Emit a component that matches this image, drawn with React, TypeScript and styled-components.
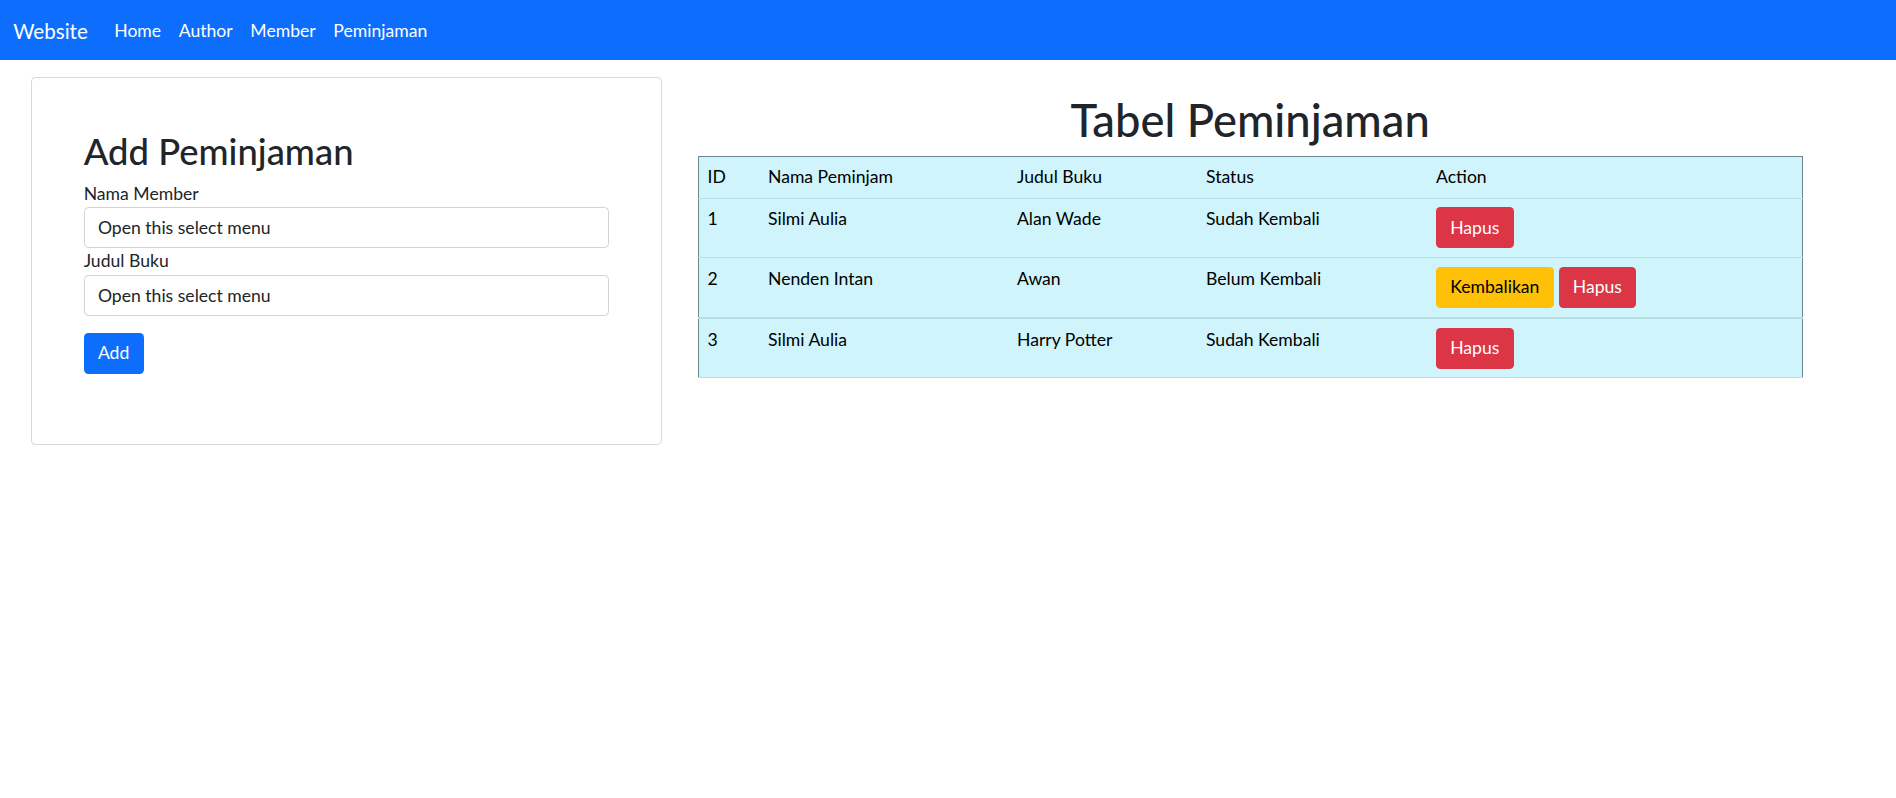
import styled, { createGlobalStyle } from "styled-components";

const GlobalStyle = createGlobalStyle`
  * {
    box-sizing: border-box;
  }
  body {
    margin: 0;
    background: #fff;
    color: #212529;
    font-family: Lato, "Liberation Sans", sans-serif;
    font-size: 17.6px;
    line-height: 1.5;
  }
`;

type Peminjaman = {
  id: number;
  nama: string;
  judul: string;
  status: string;
};

const data: Peminjaman[] = [
  { id: 1, nama: "Silmi Aulia", judul: "Alan Wade", status: "Sudah Kembali" },
  { id: 2, nama: "Nenden Intan", judul: "Awan", status: "Belum Kembali" },
  { id: 3, nama: "Silmi Aulia", judul: "Harry Potter", status: "Sudah Kembali" },
];

const menu = ["Home", "Author", "Member", "Peminjaman"];

export default function App() {
  return (
    <>
      <GlobalStyle />
      <Navbar>
        <Brand>Website</Brand>
        {menu.map((m) => (
          <NavLink key={m}>{m}</NavLink>
        ))}
      </Navbar>
      <Main>
        <Card>
          <CardTitle>Add Peminjaman</CardTitle>
          <Label>Nama Member</Label>
          <Select defaultValue="">
            <option value="">Open this select menu</option>
          </Select>
          <Label>Judul Buku</Label>
          <Select defaultValue="">
            <option value="">Open this select menu</option>
          </Select>
          <Button $variant="primary" $top>
            Add
          </Button>
        </Card>
        <TableSection>
          <PageTitle>Tabel Peminjaman</PageTitle>
          <Table>
            <colgroup>
              <col style={{ width: 61 }} />
              <col style={{ width: 249 }} />
              <col style={{ width: 189 }} />
              <col style={{ width: 230 }} />
              <col />
            </colgroup>
            <thead>
              <tr>
                <Th>ID</Th>
                <Th>Nama Peminjam</Th>
                <Th>Judul Buku</Th>
                <Th>Status</Th>
                <Th>Action</Th>
              </tr>
            </thead>
            <tbody>
              {data.map((row) => (
                <Row key={row.id}>
                  <Td>{row.id}</Td>
                  <Td>{row.nama}</Td>
                  <Td>{row.judul}</Td>
                  <Td>{row.status}</Td>
                  <Td>
                    <Actions>
                      {row.status === "Belum Kembali" && (
                        <Button $variant="warning">Kembalikan</Button>
                      )}
                      <Button $variant="danger">Hapus</Button>
                    </Actions>
                  </Td>
                </Row>
              ))}
            </tbody>
          </Table>
        </TableSection>
      </Main>
    </>
  );
}

const Navbar = styled.nav`
  display: flex;
  align-items: center;
  height: 60px;
  padding: 2px 13.2px 0;
  background: #0d6efd;
`;

const Brand = styled.a`
  margin-right: 17.6px;
  color: #fff;
  font-size: 20.6px;
  line-height: 1.5;
  cursor: pointer;
`;

const NavLink = styled.a`
  padding: 0 8.8px;
  color: #fff;
  font-size: 17.6px;
  cursor: pointer;
`;

const Main = styled.main`
  display: flex;
  align-items: flex-start;
  padding: 17px 0 0 30.7px;
`;

const Card = styled.div`
  display: flex;
  flex-direction: column;
  align-items: flex-start;
  width: 631px;
  padding: 52px 52px 70px;
  border: 1px solid rgba(0, 0, 0, 0.15);
  border-radius: 4.4px;
`;

const CardTitle = styled.h2`
  margin: 0 0 8.8px;
  font-size: 36.4px;
  font-weight: 500;
  line-height: 42px;
`;

const Label = styled.label`
  display: block;
  line-height: 26.4px;
`;

const Select = styled.select`
  appearance: none;
  width: 100%;
  height: 41px;
  padding: 0 13.2px;
  border: 1px solid #ced4da;
  border-radius: 4.4px;
  background: #fff;
  color: #212529;
  font-family: inherit;
  font-size: 17.6px;
`;

const Button = styled.button<{ $variant: "primary" | "danger" | "warning"; $top?: boolean }>`
  margin-top: ${(p) => (p.$top ? "17px" : "0")};
  padding: 6.3px 13.2px;
  border: 1px solid transparent;
  border-radius: 4.4px;
  font-family: inherit;
  font-size: 17.6px;
  line-height: 26.4px;
  cursor: pointer;
  background: ${(p) =>
    p.$variant === "primary" ? "#0d6efd" : p.$variant === "danger" ? "#dc3545" : "#ffc107"};
  color: ${(p) => (p.$variant === "warning" ? "#000" : "#fff")};
`;

const TableSection = styled.section`
  width: 1105px;
  margin: 17px 0 0 36px;
`;

const PageTitle = styled.h1`
  margin: 0 0 8.8px;
  text-align: center;
  font-size: 45.3px;
  font-weight: 500;
  line-height: 52.8px;
`;

const Table = styled.table`
  width: 100%;
  table-layout: fixed;
  border-collapse: collapse;
  background: #cff4fc;
  color: #000;
  border-top: 1px solid #6c868d;
  border-left: 1px solid #6c868d;
  border-right: 1px solid #6c868d;
`;

const Th = styled.th`
  padding: 8.8px;
  border-bottom: 1px solid #badce3;
  font-weight: 400;
  text-align: left;
  line-height: 23.4px;
`;

const Row = styled.tr`
  &:nth-child(2) td {
    border-bottom-width: 2px;
  }
`;

const Td = styled.td`
  padding: 8.8px;
  border-bottom: 1px solid #badce3;
  vertical-align: top;
  line-height: 23.4px;
`;

const Actions = styled.div`
  display: flex;
  gap: 5px;
`;
